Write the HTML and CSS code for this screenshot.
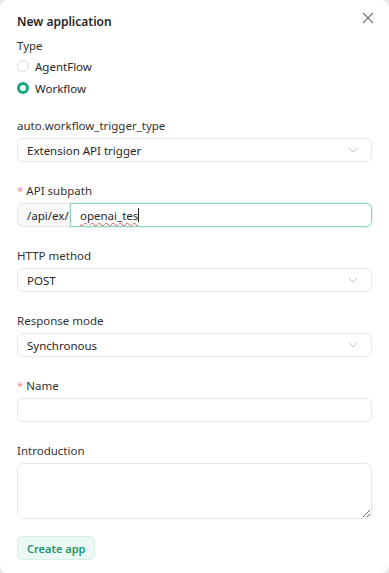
FILE: index.html
```html
<!DOCTYPE html>
<html>
<head>
<meta charset="utf-8">
<link rel="stylesheet" href="styles.css">
</head>
<body>
<div class="modal">
  <div class="header">
    <h1 class="title">New application</h1>
    <svg class="close" width="12" height="12" viewBox="0 0 12 12"><path d="M1 1L11 11M11 1L1 11" stroke="#777" stroke-width="1.2" fill="none"/></svg>
  </div>
  <div class="label type-label">Type</div>
  <div class="radios">
    <div class="radio-row"><span class="radio"></span><span>AgentFlow</span></div>
    <div class="radio-row"><span class="radio checked"></span><span>Workflow</span></div>
  </div>

  <div class="field">
    <div class="label">auto.workflow_trigger_type</div>
    <div class="select"><span>Extension API trigger</span><svg class="chev" width="10" height="6" viewBox="0 0 10 6"><path d="M1 1L5 5L9 1" stroke="#c4c4c4" stroke-width="1" fill="none"/></svg></div>
  </div>

  <div class="field">
    <div class="label"><span class="req">*</span> API subpath</div>
    <div class="group">
      <div class="addon">/api/ex/</div>
      <div class="input focus"><span class="typed">openai_tes</span><span class="caret"></span></div>
    </div>
  </div>

  <div class="field">
    <div class="label">HTTP method</div>
    <div class="select"><span>POST</span><svg class="chev" width="10" height="6" viewBox="0 0 10 6"><path d="M1 1L5 5L9 1" stroke="#c4c4c4" stroke-width="1" fill="none"/></svg></div>
  </div>

  <div class="field">
    <div class="label">Response mode</div>
    <div class="select"><span>Synchronous</span><svg class="chev" width="10" height="6" viewBox="0 0 10 6"><path d="M1 1L5 5L9 1" stroke="#c4c4c4" stroke-width="1" fill="none"/></svg></div>
  </div>

  <div class="field">
    <div class="label"><span class="req">*</span> Name</div>
    <div class="input"></div>
  </div>

  <div class="field">
    <div class="label">Introduction</div>
    <textarea class="textarea"></textarea>
  </div>

  <button class="btn">Create app</button>
</div>
</body>
</html>
```

FILE: styles.css
```css
html, body {
  margin: 0;
  padding: 0;
}
body {
  background: #e9e9e9;
  font-family: "Noto Sans", "Open Sans", sans-serif;
  color: #262626;
  font-size: 11.5px;
}
.modal {
  box-sizing: border-box;
  width: 389px;
  height: 573px;
  background: #fff;
  border-radius: 8px;
  padding: 12px 17px 0 17px;
  display: flex;
  flex-direction: column;
}
.header {
  display: flex;
  justify-content: space-between;
  align-items: center;
  height: 18px;
}
.title {
  margin: 0;
  font-size: 12px;
  font-weight: 600;
  color: #1f1f1f;
}
.close {
  margin-right: -2px;
  margin-top: -7px;
}
.label {
  line-height: 16px;
  height: 16px;
  margin-bottom: 4px;
  color: #333;
}
.type-label {
  margin-top: 8px;
  margin-bottom: 0;
}
.req {
  color: #f28b9c;
}
.radios {
  display: flex;
  flex-direction: column;
  margin-top: 1px;
  margin-bottom: 19px;
}
.radio-row {
  display: flex;
  align-items: center;
  gap: 6px;
  height: 22px;
}
.radio {
  box-sizing: border-box;
  width: 12px;
  height: 12px;
  border-radius: 50%;
  border: 1px solid #dcdcdc;
  background: #fff;
}
.radio.checked {
  border: 3.5px solid #17a57a;
  background: #fff;
}
.field {
  margin-bottom: 21px;
  display: flex;
  flex-direction: column;
}
.select, .input, .addon {
  box-sizing: border-box;
  height: 24px;
  border: 1px solid #e8e8e8;
  border-radius: 6px;
  display: flex;
  align-items: center;
  padding: 0 9px;
  background: #fff;
}
.select {
  justify-content: space-between;
}
.chev {
  margin-right: 4px;
}
.group {
  display: flex;
}
.addon {
  background: #f8f8f8;
  border-right: none;
  border-radius: 6px 0 0 6px;
  width: 53px;
  flex: none;
}
.group .input {
  flex: 1;
  border-radius: 0 6px 6px 0;
}
.input.focus {
  border: 1.5px solid #8dd6bd;
  box-shadow: 0 0 0 1px rgba(141, 214, 189, 0.25);
}
.typed {
  text-decoration: underline wavy #e0555b;
  text-decoration-thickness: 1px;
  text-underline-offset: 2px;
}
.caret {
  display: inline-block;
  width: 1px;
  height: 14px;
  background: #222;
}
.textarea {
  box-sizing: border-box;
  height: 56px;
  border: 1px solid #e8e8e8;
  border-radius: 6px;
  resize: vertical;
  font-family: inherit;
  font-size: 12px;
  outline: none;
  margin: 0;
}
.btn {
  align-self: flex-start;
  margin-top: -4px;
  height: 24px;
  padding: 0 9px;
  border: 1px solid #d4efe5;
  background: #ebf8f3;
  color: #1d9570;
  font-family: inherit;
  font-weight: 600;
  font-size: 11px;
  border-radius: 6px;
}
```
